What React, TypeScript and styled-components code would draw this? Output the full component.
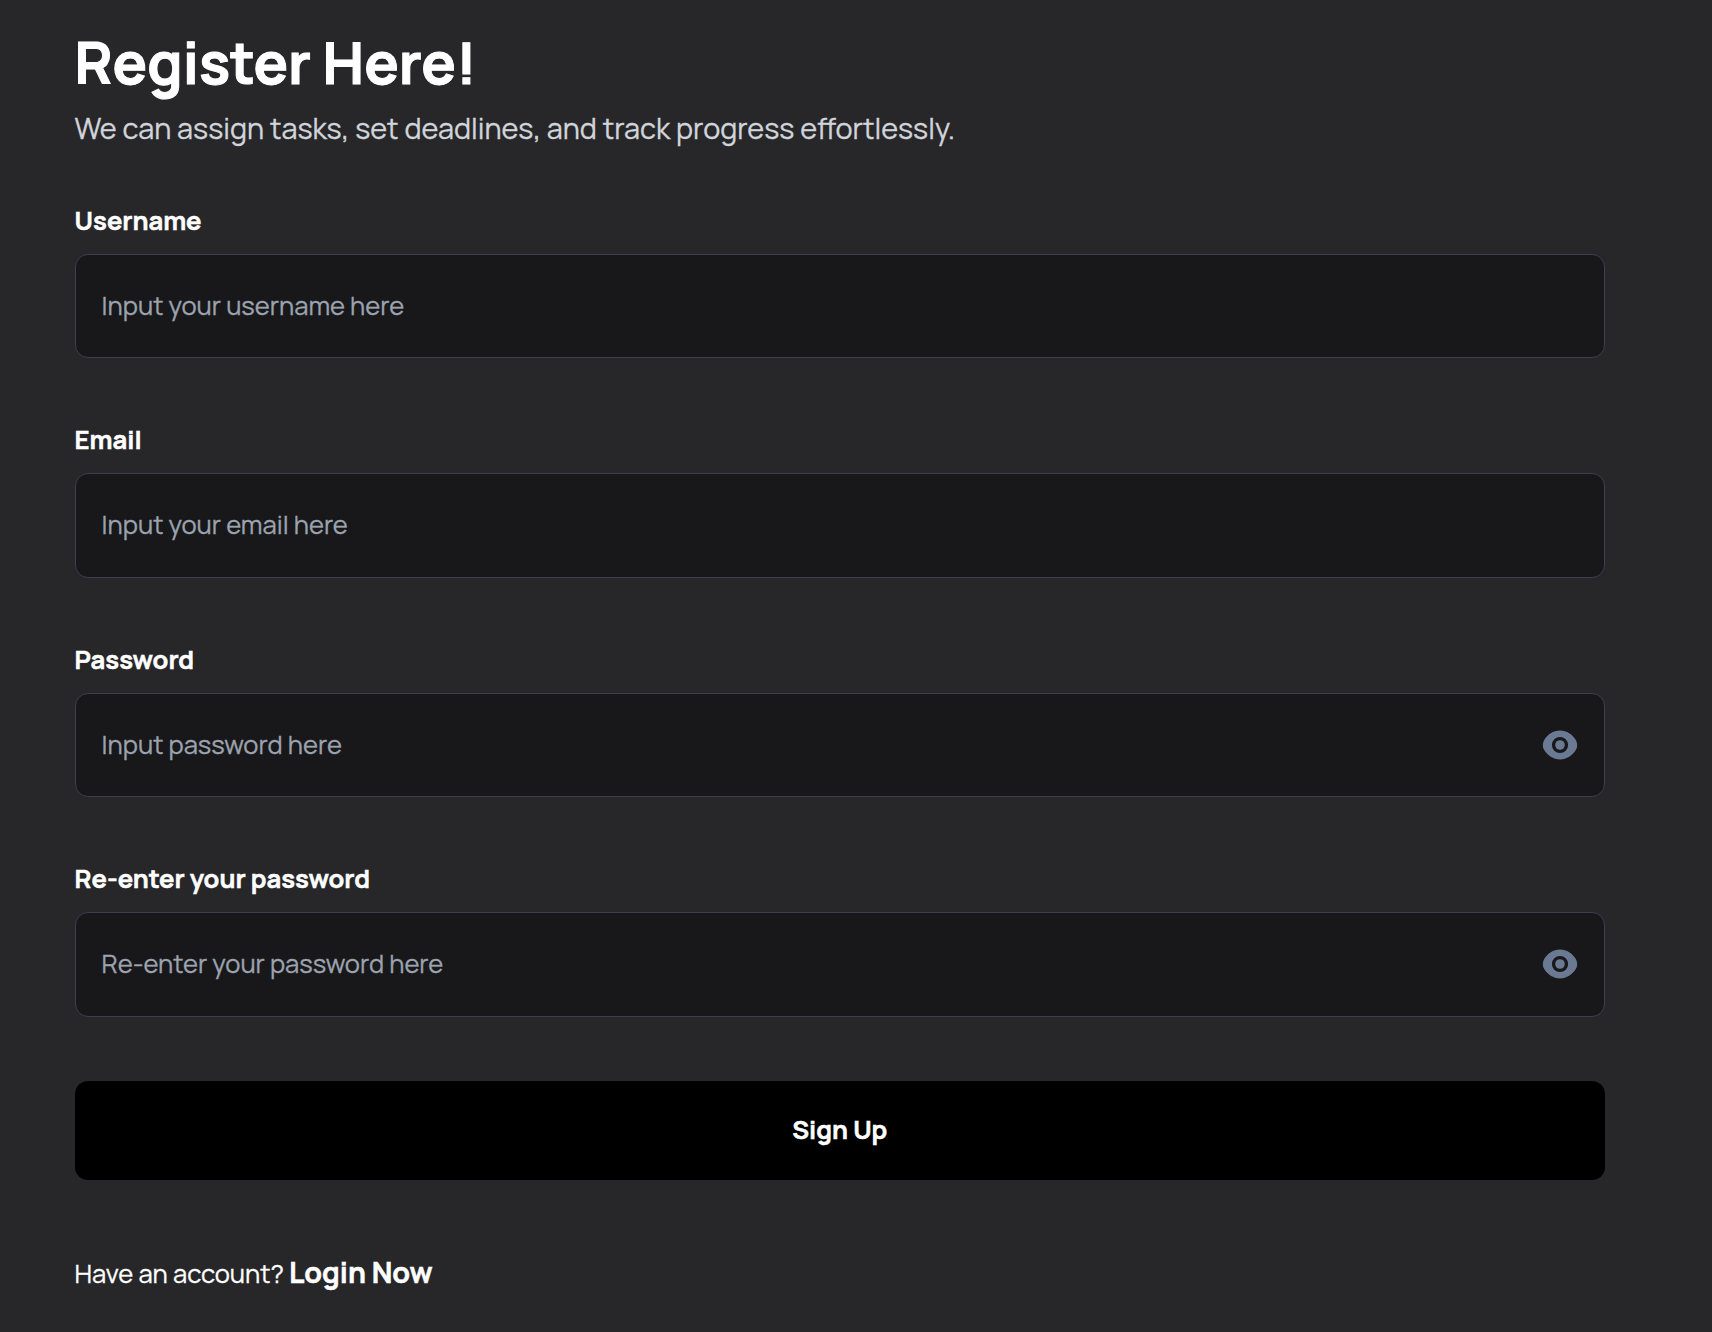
import React, { useState } from "react";
import styled, { createGlobalStyle } from "styled-components";

const GlobalStyle = createGlobalStyle`
  *, *::before, *::after { box-sizing: border-box; }
  html, body { margin: 0; padding: 0; background: #272729; }
  body { font-family: Manrope, Inter, "Liberation Sans", sans-serif; -webkit-text-stroke: 0.3px currentColor; }
`;

const Page = styled.main`
  min-height: 1332px;
  padding: 26px 107px 0 74.6px;
  background: #272729;
  color: #fff;
`;

const Title = styled.h1`
  margin: 0;
  height: 72px;
  line-height: 72px;
  font-size: 57.6px;
  font-weight: 700;
  white-space: nowrap;
  -webkit-text-stroke-width: 1px;
`;

const Subtitle = styled.p`
  margin: 8px 0 0;
  line-height: 44px;
  font-size: 28.8px;
  color: #d1d5db;
  white-space: nowrap;
`;

const Form = styled.form`
  display: flex;
  flex-direction: column;
  margin-top: 50px;
`;

const Field = styled.div`
  display: flex;
  flex-direction: column;
  height: 219.4px;
`;

const Label = styled.label`
  height: 54px;
  line-height: 41.8px;
  font-size: 25.6px;
  font-weight: 700;
  -webkit-text-stroke-width: 0.5px;
`;

const Control = styled.div`
  display: flex;
  align-items: center;
  height: 104.4px;
  padding: 0 26px;
  border: 1px solid #374151;
  border-radius: 13px;
  background: #18181a;
`;

const Input = styled.input`
  flex: 1;
  min-width: 0;
  height: 100%;
  padding: 0 0 1.4px;
  border: 0;
  outline: 0;
  background: transparent;
  color: #fff;
  font: 400 25.6px Manrope, Inter, "Liberation Sans", sans-serif;
  &::placeholder { color: #9ca3af; opacity: 1; }
`;

const Toggle = styled.button`
  display: flex;
  padding: 0;
  border: 0;
  background: none;
  color: #6b7a93;
`;

const Submit = styled.button`
  height: 99px;
  margin-top: 3.4px;
  padding: 0 0 2px;
  border: 0;
  border-radius: 13px;
  background: #000;
  color: #fff;
  font: 700 25.6px Manrope, Inter, "Liberation Sans", sans-serif;
  -webkit-text-stroke-width: 0.5px;
`;

const Footer = styled.p`
  display: flex;
  align-items: baseline;
  gap: 5px;
  margin: 68px 0 0;
  line-height: 48px;
  font-size: 25.6px;
`;

const LoginLink = styled.a`
  font-size: 28.8px;
  font-weight: 700;
  -webkit-text-stroke-width: 0.5px;
`;

const EyeIcon = () => (
  <svg width="36" height="30" viewBox="0 0 36 30" fill="currentColor">
    <path
      fillRule="evenodd"
      d="M18 .6C24.800 .6 30.500 4.600 33.800 10Q35.200 12.300 35.200 15T33.800 20C30.500 25.400 24.800 29.400 18 29.400S5.500 25.400 2.200 20Q.8 17.700 .8 15T2.200 10C5.500 4.600 11.200 .6 18 .6ZM18 6.900a8.100 8.100 0 1 0 0 16.200a8.100 8.100 0 0 0 0-16.200Z"
    />
    <circle cx="18" cy="15" r="4.800" />
  </svg>
);

type FieldProps = { id: string; label: string; placeholder: string; secret?: boolean };

const fields: FieldProps[] = [
  { id: "username", label: "Username", placeholder: "Input your username here" },
  { id: "email", label: "Email", placeholder: "Input your email here" },
  { id: "password", label: "Password", placeholder: "Input password here", secret: true },
  { id: "confirm", label: "Re-enter your password", placeholder: "Re-enter your password here", secret: true },
];

function FormField({ id, label, placeholder, secret }: FieldProps) {
  const [visible, setVisible] = useState(false);
  return (
    <Field>
      <Label htmlFor={id}>{label}</Label>
      <Control>
        <Input id={id} type={secret && !visible ? "password" : "text"} placeholder={placeholder} />
        {secret && (
          <Toggle type="button" aria-label="Toggle visibility" onClick={() => setVisible(!visible)}>
            <EyeIcon />
          </Toggle>
        )}
      </Control>
    </Field>
  );
}

export default function App() {
  return (
    <>
      <GlobalStyle />
      <Page>
        <Title>Register Here!</Title>
        <Subtitle>We can assign tasks, set deadlines, and track progress effortlessly.</Subtitle>
        <Form onSubmit={(e) => e.preventDefault()}>
          {fields.map((f) => (
            <FormField key={f.id} {...f} />
          ))}
          <Submit type="submit">Sign Up</Submit>
        </Form>
        <Footer>
          Have an account? <LoginLink>Login Now</LoginLink>
        </Footer>
      </Page>
    </>
  );
}
